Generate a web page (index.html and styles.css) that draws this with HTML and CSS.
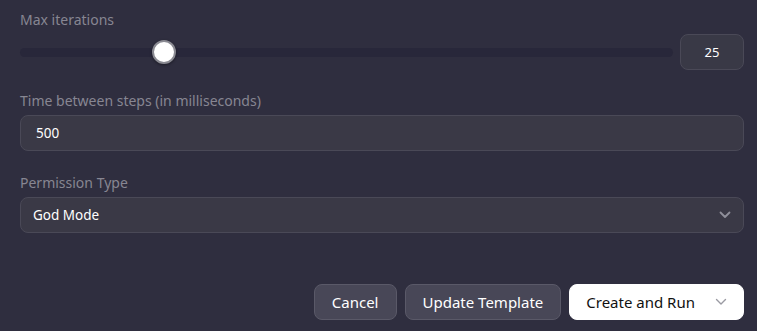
FILE: index.html
```html
<!DOCTYPE html>
<html lang="en">

<head>
    <meta charset="UTF-8">
    <meta name="viewport" content="width=device-width, initial-scale=1.0">
    <title>Agent Settings</title>
    <link rel="stylesheet" href="styles.css">
</head>

<body>
    <div class="form">
        <div class="field">
            <label class="label">Max iterations</label>
            <div class="slider-row">
                <div class="track">
                    <div class="thumb" style="left: 22%"></div>
                </div>
                <div class="number-box">25</div>
            </div>
        </div>

        <div class="field">
            <label class="label">Time between steps (in milliseconds)</label>
            <div class="input">500</div>
        </div>

        <div class="field">
            <label class="label">Permission Type</label>
            <div class="input select">
                <span>God Mode</span>
                <svg class="chevron" width="12" height="8" viewBox="0 0 12 8">
                    <path d="M1.5 1.5 L6 6 L10.5 1.5" fill="none" stroke="#8f8f9a" stroke-width="1.8" stroke-linecap="round" stroke-linejoin="round" />
                </svg>
            </div>
        </div>

        <div class="actions">
            <button type="button" class="btn">Cancel</button>
            <button type="button" class="btn">Update Template</button>
            <button type="button" class="btn primary">
                Create and Run
                <svg class="chevron" width="12" height="8" viewBox="0 0 12 8">
                    <path d="M1.5 1.5 L6 6 L10.5 1.5" fill="none" stroke="#9a9aa2" stroke-width="1.4" stroke-linecap="round" stroke-linejoin="round" />
                </svg>
            </button>
        </div>
    </div>
</body>

</html>
```

FILE: styles.css
```css
body {
    margin: 0;
    background-color: #2f2e3f;
    font-family: "Noto Sans", "Open Sans", sans-serif;
    color: #ffffff;
}

.form {
    padding: 10px 13px 12px 20px;
    display: flex;
    flex-direction: column;
}

.field {
    display: flex;
    flex-direction: column;
    margin-bottom: 22px;
}

.field:first-child {
    margin-bottom: 21px;
}

.label {
    font-size: 14px;
    color: #878692;
    line-height: 20px;
    margin-bottom: 4px;
}

.slider-row {
    display: flex;
    align-items: center;
    gap: 7px;
}

.track {
    flex: 1;
    height: 9px;
    border-radius: 5px;
    background-color: #28273a;
    position: relative;
}

.thumb {
    position: absolute;
    top: 50%;
    width: 20px;
    height: 20px;
    border-radius: 50%;
    background-color: #ffffff;
    border: 2px solid #8a8a92;
    transform: translate(-50%, -50%);
    box-shadow: 0 1px 3px rgba(0, 0, 0, 0.4);
}

.number-box {
    width: 62px;
    height: 34px;
    border: 1px solid #4a4957;
    border-radius: 8px;
    background-color: #393946;
    display: flex;
    justify-content: center;
    align-items: center;
    font-size: 13px;
}

.input {
    height: 34px;
    border: 1px solid #4a4957;
    border-radius: 8px;
    background-color: #3a3946;
    display: flex;
    align-items: center;
    padding: 0 15px;
    font-size: 13.5px;
}

.select {
    padding: 0 12px;
    justify-content: space-between;
}

.actions {
    display: flex;
    justify-content: flex-end;
    gap: 8px;
    margin-top: 29px;
}

.btn {
    height: 36px;
    padding: 0 17px;
    border: 1px solid #5a5968;
    border-radius: 8px;
    background-color: #484757;
    color: #ffffff;
    font-family: inherit;
    font-size: 15px;
    cursor: pointer;
}

.btn.primary {
    background-color: #ffffff;
    color: #111111;
    border-color: #ffffff;
    padding: 0 16px;
    display: flex;
    align-items: center;
    gap: 20px;
}
```
